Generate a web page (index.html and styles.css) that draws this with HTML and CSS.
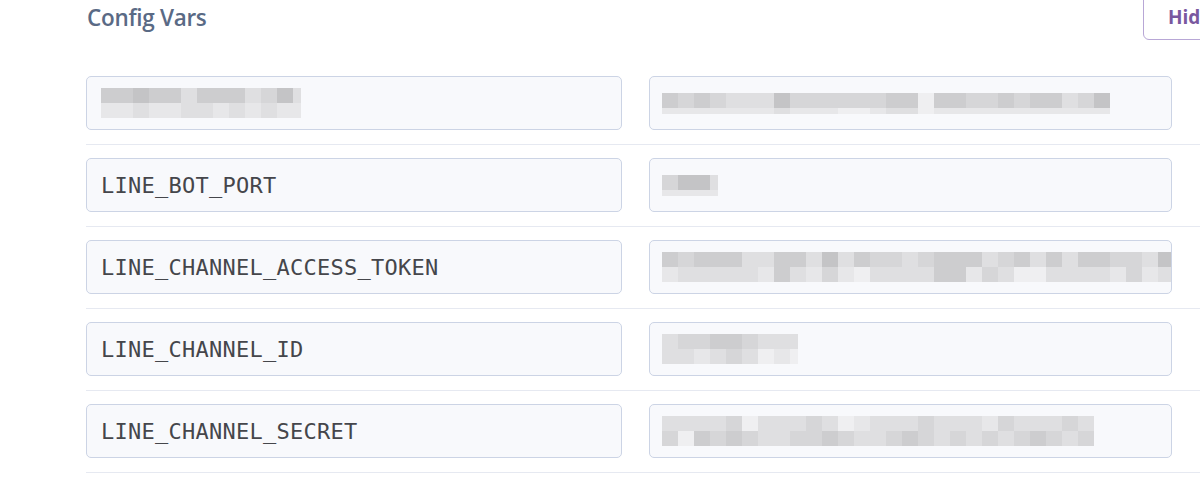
FILE: index.html
```html
<!DOCTYPE html>
<html>
<head>
<meta charset="utf-8">
<link rel="stylesheet" href="styles.css">
</head>
<body>
<div class="page">
  <div class="header">
    <h2 class="title">Config Vars</h2>
    <button class="hide-btn">Hide Config Vars</button>
  </div>
  <div class="rows">
    <div class="row">
      <div class="field key">
        <div class="pix">
          <div class="band top"><span class="c2"></span><span class="c2"></span><span class="c1"></span><span class="c2"></span><span class="c2"></span><span class="c4"></span><span class="c2"></span><span class="c2"></span><span class="c2"></span><span class="c4"></span><span class="c3"></span><span class="c1"></span><span class="c4 n"></span></div>
          <div class="band bot"><span class="c5"></span><span class="c5"></span><span class="c4"></span><span class="c5"></span><span class="c5"></span><span class="c4"></span><span class="c4"></span><span class="c5"></span><span class="c4"></span><span class="c5"></span><span class="c4"></span><span class="c5"></span><span class="c5 n"></span></div>
        </div>
      </div>
      <div class="field val">
        <div class="pix">
          <div class="band top"><span class="c2"></span><span class="c3"></span><span class="c2"></span><span class="c3"></span><span class="c4"></span><span class="c4"></span><span class="c4"></span><span class="c1"></span><span class="c3"></span><span class="c3"></span><span class="c3"></span><span class="c3"></span><span class="c3"></span><span class="c3"></span><span class="c2"></span><span class="c2"></span><span class="c6"></span><span class="c2"></span><span class="c2"></span><span class="c3"></span><span class="c3"></span><span class="c2"></span><span class="c3"></span><span class="c2"></span><span class="c2"></span><span class="c4"></span><span class="c3"></span><span class="c1"></span></div>
          <div class="band bot thin"><span class="c5"></span><span class="c5"></span><span class="c5"></span><span class="c5"></span><span class="c5"></span><span class="c5"></span><span class="c5"></span><span class="c4"></span><span class="c5"></span><span class="c5"></span><span class="c5"></span><span class="c6"></span><span class="c6"></span><span class="c5"></span><span class="c4"></span><span class="c4"></span><span class="c6"></span><span class="c5"></span><span class="c5"></span><span class="c5"></span><span class="c5"></span><span class="c5"></span><span class="c5"></span><span class="c5"></span><span class="c5"></span><span class="c5"></span><span class="c5"></span><span class="c5"></span></div>
        </div>
      </div>
    </div>
    <div class="row">
      <div class="field key"><span class="key-text">LINE_BOT_PORT</span></div>
      <div class="field val">
        <div class="pix">
          <div class="band top"><span class="c3"></span><span class="c1"></span><span class="c1"></span><span class="c4 n"></span></div>
          <div class="band bot thin"><span class="c5"></span><span class="c5"></span><span class="c5"></span><span class="c5 n"></span></div>
        </div>
      </div>
    </div>
    <div class="row">
      <div class="field key"><span class="key-text">LINE_CHANNEL_ACCESS_TOKEN</span></div>
      <div class="field val">
        <div class="pix">
          <div class="band top"><span class="c2"></span><span class="c3"></span><span class="c2"></span><span class="c2"></span><span class="c2"></span><span class="c4"></span><span class="c4"></span><span class="c2"></span><span class="c2"></span><span class="c4"></span><span class="c1"></span><span class="c4"></span><span class="c2"></span><span class="c3"></span><span class="c3"></span><span class="c4"></span><span class="c3"></span><span class="c2"></span><span class="c2"></span><span class="c2"></span><span class="c4"></span><span class="c3"></span><span class="c2"></span><span class="c4"></span><span class="c2"></span><span class="c4"></span><span class="c2"></span><span class="c2"></span><span class="c3"></span><span class="c3"></span><span class="c4"></span><span class="c1"></span></div>
          <div class="band bot"><span class="c5"></span><span class="c4"></span><span class="c4"></span><span class="c4"></span><span class="c4"></span><span class="c4"></span><span class="c5"></span><span class="c2"></span><span class="c4"></span><span class="c5"></span><span class="c3"></span><span class="c5"></span><span class="c6"></span><span class="c4"></span><span class="c4"></span><span class="c4"></span><span class="c4"></span><span class="c2"></span><span class="c2"></span><span class="c5"></span><span class="c3"></span><span class="c4"></span><span class="c6"></span><span class="c6"></span><span class="c4"></span><span class="c4"></span><span class="c4"></span><span class="c4"></span><span class="c5"></span><span class="c3"></span><span class="c5"></span><span class="c4"></span></div>
        </div>
      </div>
    </div>
    <div class="row">
      <div class="field key"><span class="key-text">LINE_CHANNEL_ID</span></div>
      <div class="field val">
        <div class="pix">
          <div class="band top"><span class="c4"></span><span class="c3"></span><span class="c3"></span><span class="c2"></span><span class="c2"></span><span class="c3"></span><span class="c4"></span><span class="c4"></span><span class="c4 n"></span></div>
          <div class="band bot"><span class="c4"></span><span class="c4"></span><span class="c5"></span><span class="c4"></span><span class="c3"></span><span class="c4"></span><span class="c6"></span><span class="c5"></span><span class="c6 n"></span></div>
        </div>
      </div>
    </div>
    <div class="row">
      <div class="field key"><span class="key-text">LINE_CHANNEL_SECRET</span></div>
      <div class="field val">
        <div class="pix">
          <div class="band top"><span class="c4"></span><span class="c4"></span><span class="c4"></span><span class="c4"></span><span class="c3"></span><span class="c6"></span><span class="c4"></span><span class="c4"></span><span class="c4"></span><span class="c3"></span><span class="c4"></span><span class="c6"></span><span class="c5"></span><span class="c4"></span><span class="c4"></span><span class="c4"></span><span class="c3"></span><span class="c4"></span><span class="c4"></span><span class="c4"></span><span class="c5"></span><span class="c3"></span><span class="c4"></span><span class="c4"></span><span class="c4"></span><span class="c3"></span><span class="c4"></span></div>
          <div class="band bot"><span class="c3"></span><span class="c6"></span><span class="c2"></span><span class="c3"></span><span class="c2"></span><span class="c3"></span><span class="c4"></span><span class="c4"></span><span class="c3"></span><span class="c3"></span><span class="c2"></span><span class="c3"></span><span class="c4"></span><span class="c4"></span><span class="c3"></span><span class="c2"></span><span class="c3"></span><span class="c4"></span><span class="c3"></span><span class="c4"></span><span class="c3"></span><span class="c4"></span><span class="c3"></span><span class="c2"></span><span class="c3"></span><span class="c4"></span><span class="c3"></span></div>
        </div>
      </div>
    </div>
  </div>
</div>
</body>
</html>
```

FILE: styles.css
```css
html, body {
  margin: 0;
  padding: 0;
  background: #ffffff;
  overflow: hidden;
}

.page {
  width: 1200px;
  height: 477px;
  overflow: hidden;
  padding-left: 86px;
  box-sizing: border-box;
}

.header {
  display: grid;
  grid-template-columns: 1057px max-content;
  grid-template-rows: 36px;
  align-items: center;
  height: 36px;
  margin-bottom: 27px;
}

.title {
  margin: 0;
  margin-left: 1px;
  font-family: "Open Sans", "Liberation Sans", sans-serif;
  font-weight: 600;
  font-size: 22.5px;
  line-height: 30px;
  color: #5a6a85;
  letter-spacing: -0.3px;
}

.hide-btn {
  height: 46px;
  margin-top: -2px;
  align-self: center;
  padding: 0 24px;
  background: #ffffff;
  border: 1px solid #b8a7d6;
  border-radius: 6px;
  font-family: "Open Sans", "Liberation Sans", sans-serif;
  font-weight: 700;
  font-size: 19px;
  color: #79589f;
  white-space: nowrap;
}

.rows {
  width: 1200px;
}

.row {
  display: flex;
  gap: 27px;
  padding: 13px 0 14px;
  border-bottom: 1px solid #e6e9f1;
}

.field {
  box-sizing: border-box;
  height: 54px;
  border: 1px solid #ccd4e5;
  border-radius: 5px;
  background: #f8f9fc;
  display: flex;
  align-items: center;
}

.key {
  width: 536px;
  padding-left: 14px;
}

.val {
  width: 523px;
  padding-left: 12px;
  overflow: hidden;
}

.key-text {
  font-family: "DejaVu Sans Mono", "Liberation Mono", monospace;
  font-size: 22px;
  letter-spacing: 0.25px;
  color: #45464b;
  white-space: nowrap;
}

.pix {
  display: flex;
  flex-direction: column;
}

.band {
  display: flex;
  height: 15px;
}

.band.thin {
  height: 6px;
}

.band span {
  display: block;
  width: 16px;
  height: 100%;
  flex-shrink: 0;
}

.band span.n {
  width: 8px;
}

.c1 { background: #c4c4c6; }
.c2 { background: #cdcdcf; }
.c3 { background: #d6d6d8; }
.c4 { background: #dfdfe1; }
.c5 { background: #e7e7e9; }
.c6 { background: #efeff1; }
```
